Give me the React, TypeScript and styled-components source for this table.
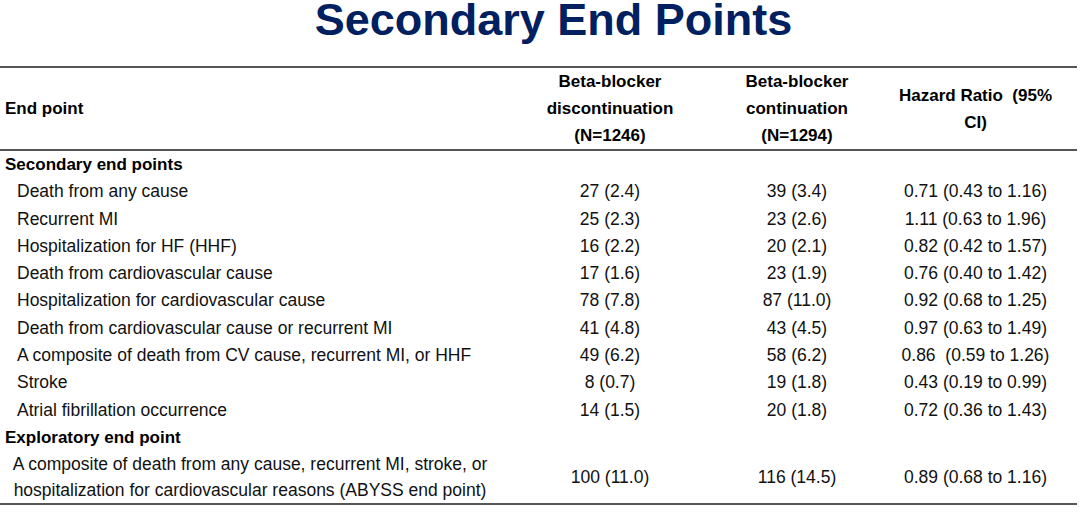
import React from "react";
import styled, { createGlobalStyle } from "styled-components";

const GlobalStyle = createGlobalStyle`
  html, body {
    margin: 0;
    padding: 0;
    background: #ffffff;
  }
  body {
    font-family: "Liberation Sans", Arial, sans-serif;
    color: #111111;
  }
`;

const COLS = "500px 220px 154px 203px";

const Page = styled.div`
  width: 1080px;
  height: 513px;
  overflow: hidden;
  display: flex;
  flex-direction: column;
`;

const Title = styled.h1`
  margin: 0 0 26px 0;
  padding-left: 30px;
  width: 1077px;
  box-sizing: border-box;
  text-align: center;
  font-family: "Liberation Sans", Arial, sans-serif;
  font-weight: 700;
  font-size: 45px;
  line-height: 40px;
  color: #002060;
`;

const Table = styled.div`
  width: 1077px;
  border-top: 2px solid #555555;
  border-bottom: 2px solid #555555;
`;

const HeaderRow = styled.div`
  display: grid;
  grid-template-columns: ${COLS};
  border-bottom: 2px solid #555555;
  font-weight: 700;
  font-size: 17px;
  line-height: 27px;
  color: #000000;
`;

const HeadCell = styled.div<{ $align?: "left" | "center" }>`
  display: flex;
  align-items: center;
  justify-content: ${(p) => (p.$align === "left" ? "flex-start" : "center")};
  text-align: ${(p) => p.$align ?? "center"};
  padding-left: ${(p) => (p.$align === "left" ? "5px" : "0")};
  white-space: pre;
`;

const SectionRow = styled.div`
  font-weight: 700;
  font-size: 17px;
  line-height: 27.3px;
  padding-left: 5px;
  color: #000000;
`;

const DataRow = styled.div<{ $tight?: boolean }>`
  display: grid;
  grid-template-columns: ${COLS};
  font-size: 17.5px;
  line-height: ${(p) => (p.$tight ? "26px" : "27.3px")};
`;

const LabelCell = styled.div<{ $centered?: boolean }>`
  padding-left: ${(p) => (p.$centered ? "0" : "17px")};
  text-align: ${(p) => (p.$centered ? "center" : "left")};
  white-space: nowrap;
`;

const ValueCell = styled.div`
  display: flex;
  align-items: center;
  justify-content: center;
  white-space: pre;
`;

type Row = { label: string; disc: string; cont: string; hr: string };

const secondary: Row[] = [
  { label: "Death from any cause", disc: "27 (2.4)", cont: "39 (3.4)", hr: "0.71 (0.43 to 1.16)" },
  { label: "Recurrent MI", disc: "25 (2.3)", cont: "23 (2.6)", hr: "1.11 (0.63 to 1.96)" },
  { label: "Hospitalization for HF (HHF)", disc: "16 (2.2)", cont: "20 (2.1)", hr: "0.82 (0.42 to 1.57)" },
  { label: "Death from cardiovascular cause", disc: "17 (1.6)", cont: "23 (1.9)", hr: "0.76 (0.40 to 1.42)" },
  { label: "Hospitalization for cardiovascular cause", disc: "78 (7.8)", cont: "87 (11.0)", hr: "0.92 (0.68 to 1.25)" },
  { label: "Death from cardiovascular cause or recurrent MI", disc: "41 (4.8)", cont: "43 (4.5)", hr: "0.97 (0.63 to 1.49)" },
  { label: "A composite of death from CV cause, recurrent MI, or HHF", disc: "49 (6.2)", cont: "58 (6.2)", hr: "0.86  (0.59 to 1.26)" },
  { label: "Stroke", disc: "8 (0.7)", cont: "19 (1.8)", hr: "0.43 (0.19 to 0.99)" },
  { label: "Atrial fibrillation occurrence", disc: "14 (1.5)", cont: "20 (1.8)", hr: "0.72 (0.36 to 1.43)" },
];

export default function App() {
  return (
    <>
      <GlobalStyle />
      <Page>
        <Title>Secondary End Points</Title>
        <Table>
          <HeaderRow>
            <HeadCell $align="left">End point</HeadCell>
            <HeadCell>{"Beta-blocker\ndiscontinuation\n(N=1246)"}</HeadCell>
            <HeadCell>{"Beta-blocker\ncontinuation\n(N=1294)"}</HeadCell>
            <HeadCell>{"Hazard Ratio  (95%\nCI)"}</HeadCell>
          </HeaderRow>
          <SectionRow>Secondary end points</SectionRow>
          {secondary.map((r) => (
            <DataRow key={r.label}>
              <LabelCell>{r.label}</LabelCell>
              <ValueCell>{r.disc}</ValueCell>
              <ValueCell>{r.cont}</ValueCell>
              <ValueCell>{r.hr}</ValueCell>
            </DataRow>
          ))}
          <SectionRow>Exploratory end point</SectionRow>
          <DataRow $tight>
            <LabelCell $centered>
              A composite of death from any cause, recurrent MI, stroke, or
              <br />
              hospitalization for cardiovascular reasons (ABYSS end point)
            </LabelCell>
            <ValueCell>100 (11.0)</ValueCell>
            <ValueCell>116 (14.5)</ValueCell>
            <ValueCell>0.89 (0.68 to 1.16)</ValueCell>
          </DataRow>
        </Table>
      </Page>
    </>
  );
}
